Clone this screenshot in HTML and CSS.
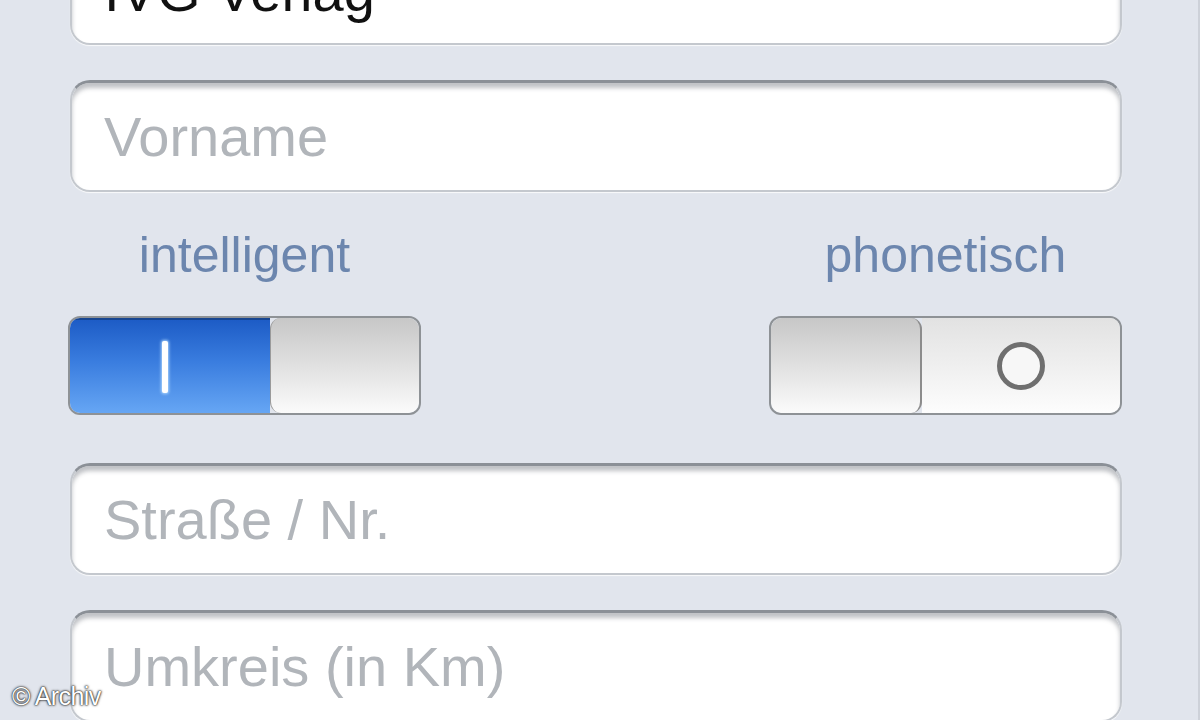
FILE: index.html
```html
<!DOCTYPE html>
<html lang="de">
<head>
<meta charset="utf-8">
<title>Suche</title>
<link rel="stylesheet" href="styles.css">
</head>
<body>
<div class="page">
  <div class="form">
    <div class="field"><span class="value">IVG Verlag</span></div>
    <div class="field gap-small"><span class="placeholder">Vorname</span></div>
    <div class="switches">
      <div class="switch-group">
        <div class="switch-label">intelligent</div>
        <div class="toggle">
          <div class="track-on"><span class="on-mark"></span></div>
          <div class="knob knob-right"></div>
        </div>
      </div>
      <div class="switch-group">
        <div class="switch-label">phonetisch</div>
        <div class="toggle">
          <div class="knob knob-left"></div>
          <div class="track-off"><span class="off-mark"></span></div>
        </div>
      </div>
    </div>
    <div class="field gap-large"><span class="placeholder">Straße / Nr.</span></div>
    <div class="field gap-small"><span class="placeholder">Umkreis (in Km)</span></div>
  </div>
  <div class="watermark">© Archiv</div>
</div>
</body>
</html>
```

FILE: styles.css
```css
html, body {
  margin: 0;
  padding: 0;
}
body {
  background: #e1e5ed;
  font-family: "Liberation Sans", Arial, sans-serif;
}
.page {
  position: relative;
  width: 1200px;
  height: 720px;
  overflow: hidden;
  box-sizing: border-box;
  border-right: 2px solid #cdd1d9;
  background: #e1e5ed;
}
.form {
  margin-top: -67px;
  padding-left: 70px;
  width: 1052px;
  display: flex;
  flex-direction: column;
}
.field {
  height: 112px;
  box-sizing: border-box;
  background: #ffffff;
  border: 2px solid #c4c8ce;
  border-top: 3px solid #8b9097;
  border-radius: 20px;
  box-shadow: inset 0 5px 4px rgba(90, 95, 105, 0.38), 0 1px 1px rgba(255,255,255,0.8);
  display: flex;
  align-items: center;
  padding-left: 32px;
  font-size: 56px;
}
.gap-small {
  margin-top: 35px;
}
.gap-large {
  margin-top: 48px;
}
.value {
  color: #111111;
  padding-top: 4px;
}
.placeholder {
  color: #b1b5ba;
}
.switches {
  display: flex;
  justify-content: space-between;
  margin-left: -2px;
}
.switch-group {
  display: flex;
  flex-direction: column;
  align-items: center;
}
.switch-label {
  margin-top: 33px;
  height: 60px;
  line-height: 60px;
  font-size: 50px;
  color: #6c86ae;
  margin-bottom: 31px;
}
.toggle {
  width: 353px;
  height: 99px;
  box-sizing: border-box;
  border: 2px solid #8e9296;
  border-radius: 12px;
  overflow: hidden;
  display: flex;
}
.track-on {
  flex: 0 0 200px;
  background: linear-gradient(#1d5cc6, #3a7ddf 45%, #66a6f4);
  border-top: 2px solid #174591;
  display: flex;
  align-items: center;
  justify-content: center;
}
.on-mark {
  width: 6px;
  height: 52px;
  background: #ffffff;
  border-radius: 2px;
  box-shadow: 0 0 3px 1px rgba(180, 220, 255, 0.9);
  margin-right: 10px;
}
.knob {
  flex: 1 1 auto;
  background: linear-gradient(#c7c7c7, #e3e3e3 55%, #fbfbfb);
  border-radius: 11px;
  box-sizing: border-box;
}
.knob-right {
  border-left: 1px solid #9a9a9a;
}
.knob-left {
  flex: 0 0 151px;
  border-right: 2px solid #8c8c8c;
}
.track-off {
  flex: 1 1 auto;
  background: linear-gradient(#e2e2e2, #efefef 50%, #fdfdfd);
  display: flex;
  align-items: center;
  justify-content: center;
}
.off-mark {
  width: 38px;
  height: 38px;
  border: 5px solid #6f6f6f;
  border-radius: 50%;
  background: #f7f7f7;
}
.watermark {
  position: absolute;
  left: 12px;
  bottom: 9px;
  font-size: 25px;
  letter-spacing: -0.6px;
  color: #ffffff;
  text-shadow: 0 0 2px #333, 0 0 3px #444, 0 0 1px #000;
}
```
